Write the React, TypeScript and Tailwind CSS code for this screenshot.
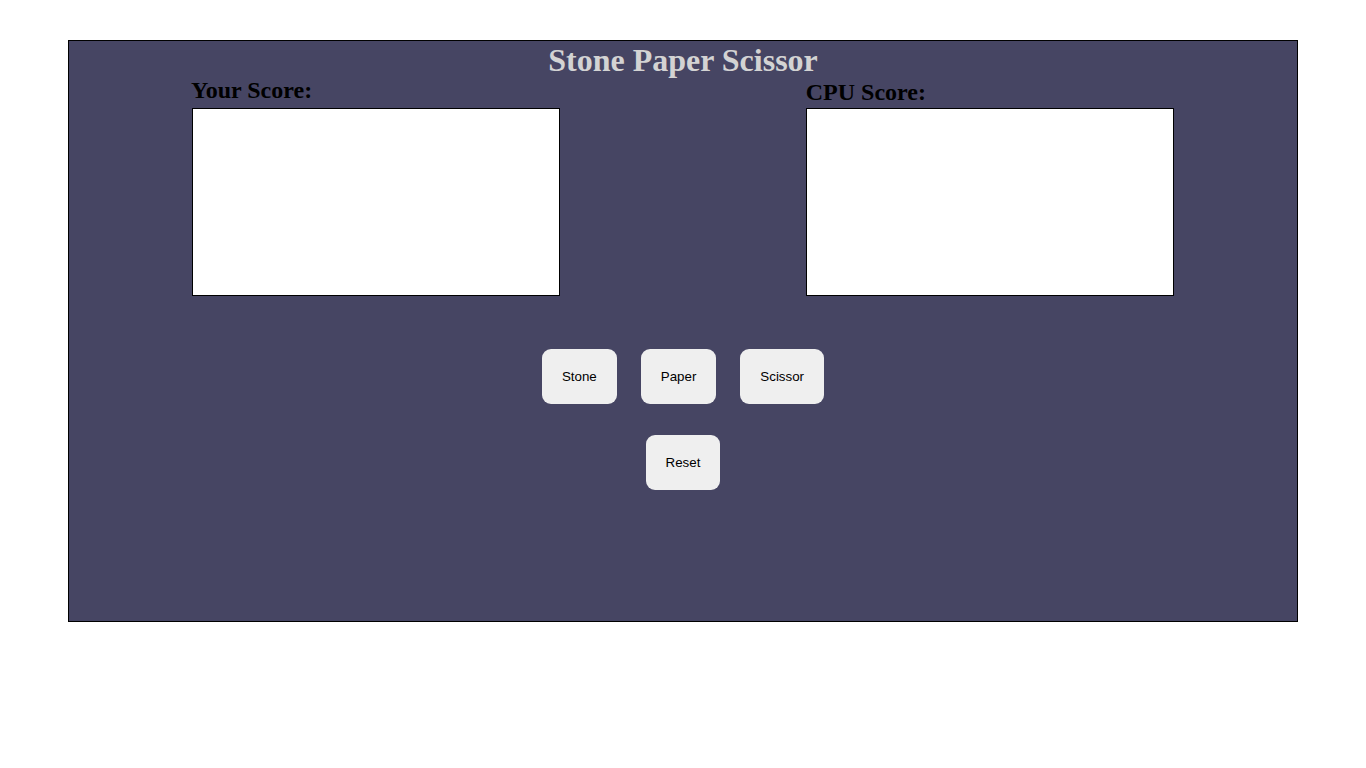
import React, { useState } from 'react';

const choices = ['Stone', 'Paper', 'Scissor'];

const App: React.FC = () => {
  const [you, setYou] = useState(0);
  const [cpu, setCpu] = useState(0);

  const play = (pick: number) => {
    const c = Math.floor(Math.random() * 3);
    if (pick === c) return;
    if ((pick + 1) % 3 === c) setCpu(cpu + 1);
    else setYou(you + 1);
  };

  return (
    <div className="min-h-screen bg-white pt-[40px]">
      <div className="mx-auto w-[90%] h-[582px] border border-black bg-[#464563] font-['Liberation_Serif',serif]">
        <h1 className="pt-[3px] text-center text-[32px] leading-[32px] font-bold text-[#d3d3d3]">Stone Paper Scissor</h1>
        <div className="flex justify-around">
          <div className="w-[30%] flex flex-col">
            <h2 className="mt-[2px] mb-[6px] -ml-px text-[24px] leading-[24px] font-bold text-black">Your Score:</h2>
            <div className="h-[188px] border border-black bg-white">{you > 0 ? '' : ''}</div>
          </div>
          <div className="w-[30%] flex flex-col">
            <h2 className="mt-[4px] mb-[4px] text-[24px] leading-[24px] font-bold text-black">CPU Score:</h2>
            <div className="h-[188px] border border-black bg-white">{cpu > 0 ? '' : ''}</div>
          </div>
        </div>
        <div className="mt-[53px] flex justify-center gap-[24px] font-['Liberation_Sans',Arial,sans-serif]">
          {choices.map((c, i) => (
            <button
              key={c}
              onClick={() => play(i)}
              className="h-[55px] px-[20px] rounded-[9px] bg-[#efefef] text-[13.33px] text-black"
            >
              {c}
            </button>
          ))}
        </div>
        <div className="mt-[31px] flex justify-center font-['Liberation_Sans',Arial,sans-serif]">
          <button
            onClick={() => { setYou(0); setCpu(0); }}
            className="h-[55px] px-[20px] rounded-[9px] bg-[#efefef] text-[13.33px] text-black"
          >
            Reset
          </button>
        </div>
      </div>
    </div>
  );
};

export default App;
